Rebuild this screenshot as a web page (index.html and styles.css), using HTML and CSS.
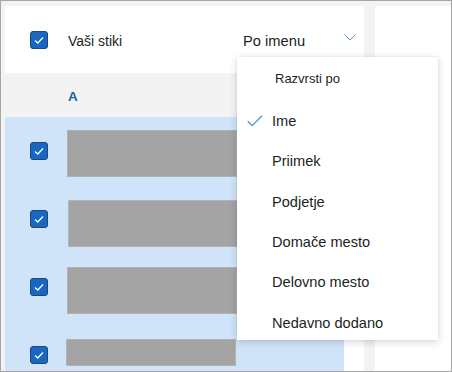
FILE: index.html
```html
<!DOCTYPE html>
<html lang="sl">
<head>
    <meta charset="UTF-8">
    <meta name="viewport" content="width=device-width, initial-scale=1.0">
    <title>Vaši stiki</title>
    <link rel="stylesheet" href="styles.css">
</head>
<body>
    <div class="frame">
        <div class="contacts">
            <div class="toolbar">
                <div class="checkbox">
                    <svg width="16" height="16" viewBox="0 0 16 16"><polyline points="4,8.5 6.8,11 12,5.5" fill="none" stroke="#fff" stroke-width="1.3"/></svg>
                </div>
                <span class="title">Vaši stiki</span>
                <div class="sort">
                    <span>Po imenu</span>
                    <svg width="12" height="7" viewBox="0 0 12 7"><polyline points="0.5,0.5 6,6 11.5,0.5" fill="none" stroke="#5b9bd8" stroke-width="1"/></svg>
                </div>
            </div>

            <div class="letter">A</div>

            <!-- Izbrani stiki -->
            <div class="list">
                <div class="row">
                    <div class="checkbox">
                        <svg width="16" height="16" viewBox="0 0 16 16"><polyline points="4,8.5 6.8,11 12,5.5" fill="none" stroke="#fff" stroke-width="1.3"/></svg>
                    </div>
                    <div class="bar bar-1"></div>
                </div>
                <div class="row">
                    <div class="checkbox">
                        <svg width="16" height="16" viewBox="0 0 16 16"><polyline points="4,8.5 6.8,11 12,5.5" fill="none" stroke="#fff" stroke-width="1.3"/></svg>
                    </div>
                    <div class="bar bar-2"></div>
                </div>
                <div class="row">
                    <div class="checkbox">
                        <svg width="16" height="16" viewBox="0 0 16 16"><polyline points="4,8.5 6.8,11 12,5.5" fill="none" stroke="#fff" stroke-width="1.3"/></svg>
                    </div>
                    <div class="bar bar-3"></div>
                </div>
                <div class="row">
                    <div class="checkbox">
                        <svg width="16" height="16" viewBox="0 0 16 16"><polyline points="4,8.5 6.8,11 12,5.5" fill="none" stroke="#fff" stroke-width="1.3"/></svg>
                    </div>
                    <div class="bar bar-4"></div>
                </div>
            </div>
        </div>

        <div class="pane"></div>

        <!-- Meni za razvrščanje -->
        <div class="menu">
            <div class="menu-header">Razvrsti po</div>
            <div class="menu-item">
                <span class="menu-check">
                    <svg width="16" height="12" viewBox="0 0 16 12"><polyline points="0.8,6.2 5.2,10.6 15,0.8" fill="none" stroke="#4f92d6" stroke-width="1.3"/></svg>
                </span>
                Ime
            </div>
            <div class="menu-item"><span class="menu-check"></span>Priimek</div>
            <div class="menu-item"><span class="menu-check"></span>Podjetje</div>
            <div class="menu-item"><span class="menu-check"></span>Domače mesto</div>
            <div class="menu-item"><span class="menu-check"></span>Delovno mesto</div>
            <div class="menu-item"><span class="menu-check"></span>Nedavno dodano</div>
        </div>
    </div>
</body>
</html>
```

FILE: styles.css
```css
body {
    margin: 0;
    font-family: "Liberation Sans", Arial, sans-serif;
    color: #201f1e;
}
.frame {
    position: relative;
    width: 452px;
    height: 372px;
    box-sizing: border-box;
    border: 1px solid #a6a6a6;
    background: #f3f3f3;
    padding: 5px 0 0 4px;
    display: flex;
    gap: 11px;
    overflow: hidden;
}
.contacts {
    width: 359px;
    display: flex;
    flex-direction: column;
    min-height: 0;
}
.toolbar {
    height: 67px;
    flex-shrink: 0;
    background: #fff;
    display: flex;
    align-items: center;
    padding-left: 25px;
}
.checkbox {
    width: 16px;
    height: 16px;
    flex-shrink: 0;
    background: #1767c4;
    border: 1px solid #27456b;
    border-radius: 3px;
    display: flex;
}
.title {
    width: 175px;
    margin-left: 20px;
    font-size: 14px;
    padding-top: 2px;
}
.sort {
    flex: 1;
    display: flex;
    justify-content: space-between;
    align-items: center;
    padding-right: 8px;
    font-size: 14.7px;
    padding-top: 2px;
}
.sort svg {
    margin-top: -6px;
}
.letter {
    height: 44px;
    flex-shrink: 0;
    padding-left: 63px;
    display: flex;
    align-items: center;
    font-size: 13.5px;
    font-weight: bold;
    color: #1f5ea6;
    padding-top: 3px;
    box-sizing: border-box;
}
.list {
    flex: 1;
    min-height: 0;
    overflow: hidden;
    background: #fff;
}
.row {
    width: 339px;
    height: 68px;
    background: #cfe3f9;
    display: flex;
    align-items: flex-start;
    padding-left: 25px;
    box-sizing: border-box;
}
.row .checkbox {
    margin-top: 25px;
}
.bar {
    width: 168px;
    height: 45px;
    margin-left: 19px;
    background: #a4a4a4;
    border: 1px solid #b3b3b3;
}
.bar-1 { margin-top: 13px; }
.bar-2 { margin-top: 15px; margin-left: 20px; }
.bar-3 { margin-top: 14px; }
.bar-4 { margin-top: 18px; height: 25px; margin-left: 18px; }
.pane {
    flex: 1;
    background: #fff;
}
.menu {
    position: absolute;
    left: 236px;
    top: 56px;
    width: 201px;
    height: 283px;
    background: #fff;
    box-shadow: 0 2px 8px rgba(0, 0, 0, 0.16), 0 0 2px rgba(0, 0, 0, 0.08);
    overflow: hidden;
}
.menu-header {
    height: 43.6px;
    line-height: 43.6px;
    padding-left: 38px;
    font-size: 13px;
}
.menu-item {
    height: 40.4px;
    display: flex;
    align-items: center;
    padding-left: 10px;
    font-size: 14.6px;
}
.menu-check {
    width: 25px;
    display: flex;
    align-items: center;
}
```
